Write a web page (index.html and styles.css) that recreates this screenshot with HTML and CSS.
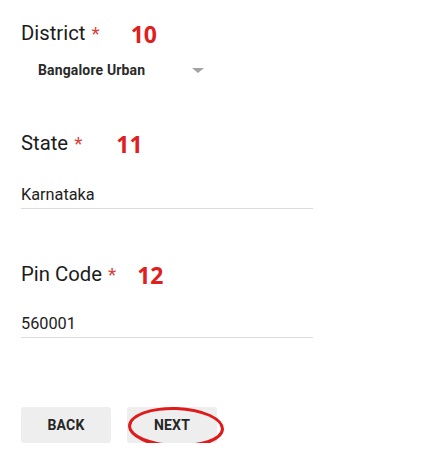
FILE: index.html
```html
<!DOCTYPE html>
<html lang="en">
<head>
<meta charset="utf-8">
<title>Address</title>
<link rel="stylesheet" href="styles.css">
</head>
<body>
<main class="form">
  <section class="field field-district">
    <div class="label-row">
      <span class="label">District <span class="req">*</span></span>
      <span class="step step-10">10</span>
    </div>
    <div class="select">
      <span class="select-value">Bangalore Urban</span>
      <span class="caret"></span>
    </div>
  </section>

  <section class="field field-state">
    <div class="label-row">
      <span class="label">State <span class="req">*</span></span>
      <span class="step step-11">11</span>
    </div>
    <div class="input input-state">Karnataka</div>
  </section>

  <section class="field field-pin">
    <div class="label-row">
      <span class="label">Pin Code <span class="req">*</span></span>
      <span class="step step-12">12</span>
    </div>
    <div class="input input-pin">560001</div>
  </section>

  <div class="actions">
    <button class="btn" type="button">BACK</button>
    <button class="btn btn-next" type="button">NEXT<span class="ring"></span></button>
  </div>
</main>
</body>
</html>
```

FILE: styles.css
```css
html, body {
  margin: 0;
  padding: 0;
  background: #ffffff;
}
body {
  font-family: Roboto, "Liberation Sans", Arial, sans-serif;
  color: #1f1f1f;
}
.form {
  padding: 21px 0 0 21px;
}
.label-row {
  display: flex;
  align-items: flex-start;
  height: 24px;
}
.label {
  font-size: 20.3px;
  line-height: 24px;
  color: #1c1c1c;
}
.req {
  color: #d9403a;
  font-size: 19px;
  margin-left: 1px;
}
.step {
  font-family: "Open Sans", "DejaVu Sans", sans-serif;
  font-weight: 700;
  font-size: 23px;
  line-height: 24px;
  margin-top: 1px;
  color: #e0201e;
}
.step-10 { margin-left: 31px; }
.step-11 { margin-left: 34px; }
.step-12 { margin-left: 21px; }

.select {
  display: flex;
  align-items: center;
  justify-content: space-between;
  width: 166px;
  margin: 15px 0 0 17px;
  height: 20px;
}
.select-value {
  font-size: 14px;
  font-weight: 700;
  letter-spacing: 0.15px;
  color: #2a2a2a;
}
.caret {
  width: 0;
  height: 0;
  border-left: 6px solid transparent;
  border-right: 6px solid transparent;
  border-top: 5px solid #a3a3a3;
}

.field-state { margin-top: 51px; }
.field-pin { margin-top: 53px; }

.input {
  width: 292px;
  padding-bottom: 3px;
  font-size: 16.3px;
  line-height: 20px;
  color: #222222;
  border-bottom: 1px solid #dcdcdc;
}
.input-state { margin-top: 30px; }
.input-pin { margin-top: 28px; }

.actions {
  display: flex;
  gap: 16px;
  margin-top: 69px;
}
.btn {
  position: relative;
  width: 90px;
  height: 36px;
  border: 0;
  border-radius: 3px;
  background: #eeeeee;
  font-family: Roboto, "Liberation Sans", Arial, sans-serif;
  font-size: 14px;
  font-weight: 700;
  color: #262626;
  letter-spacing: 0.2px;
  padding: 0;
}
.ring {
  position: absolute;
  left: 1px;
  top: 0;
  width: 90px;
  height: 34px;
  border: 3px solid #df1a1a;
  border-bottom-width: 4px;
  border-radius: 50%;
  transform: rotate(2deg);
}
```
